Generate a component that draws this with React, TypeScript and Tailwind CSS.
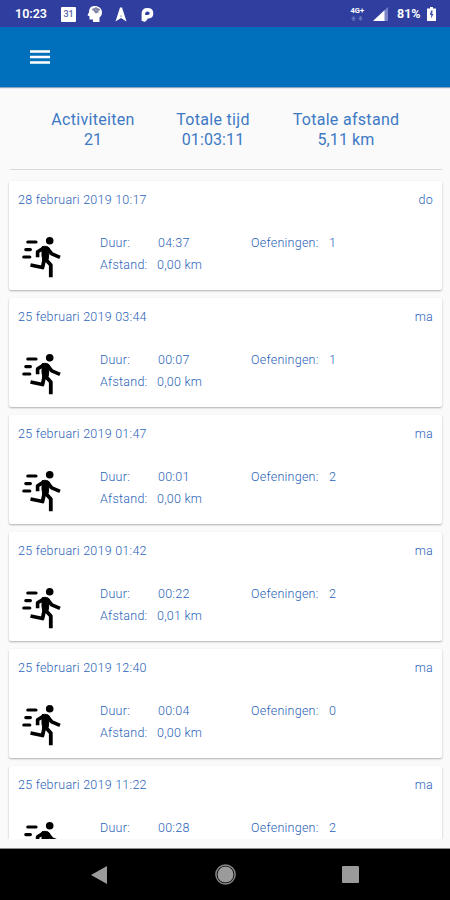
import type { ReactNode } from 'react'

type Activity = {
  date: string
  day: string
  duration: string
  distance?: string
  exercises: number
}

const activities: Activity[] = [
  { date: '28 februari 2019 10:17', day: 'do', duration: '04:37', distance: '0,00 km', exercises: 1 },
  { date: '25 februari 2019 03:44', day: 'ma', duration: '00:07', distance: '0,00 km', exercises: 1 },
  { date: '25 februari 2019 01:47', day: 'ma', duration: '00:01', distance: '0,00 km', exercises: 2 },
  { date: '25 februari 2019 01:42', day: 'ma', duration: '00:22', distance: '0,01 km', exercises: 2 },
  { date: '25 februari 2019 12:40', day: 'ma', duration: '00:04', distance: '0,00 km', exercises: 0 },
  { date: '25 februari 2019 11:22', day: 'ma', duration: '00:28', exercises: 2 },
]

function RunnerIcon() {
  return (
    <svg className="block h-11 w-[42px]" viewBox="0 0 42 44" fill="none" stroke="#000" strokeWidth="3.6" strokeLinejoin="round">
      <path d="M7.8 6h8.2M5.8 13.6h4.6M3.8 21h6" strokeWidth="3.2" strokeLinecap="round" />
      <circle cx="29.7" cy="4.8" r="3.8" fill="#000" stroke="none" />
      <path d="M17.6 21.3v-5.6l6.5-3.8M27.5 12.5l4.3 5.3 8.2 3.5" />
      <path d="M22 10.8q5-1.5 7.5 1.5l-1.3 11-5.2 1.5-1-5z" fill="#000" strokeWidth="1" />
      <path d="M24.5 22.5l-2 9-12-2.5M25.8 23.5l5 5.5v12.2" strokeWidth="3.8" />
    </svg>
  )
}

function Total({ label, children, className }: { label: string; children: ReactNode; className: string }) {
  return (
    <div className={className}>
      <div>{label}</div>
      <div className="tracking-[0.1px]">{children}</div>
    </div>
  )
}

function ActivityCard({ activity }: { activity: Activity }) {
  return (
    <div className="h-[109px] shrink-0 rounded-[2px] bg-white px-[9px] pt-[9px] text-[12.5px] font-light leading-5 tracking-[0.25px] text-[#2a63b8] shadow-[0_1px_2px_rgba(0,0,0,0.3)]">
      <div className="flex justify-between">
        <span>{activity.date}</span>
        <span>{activity.day}</span>
      </div>
      <div className="flex pt-[22px]">
        <div className="w-[82px] pl-[2px] pt-1">
          <RunnerIcon />
        </div>
        <div className="w-[151px] leading-[22px]">
          <div className="flex">
            <span className="w-[58px]">Duur:</span>
            <span>{activity.duration}</span>
          </div>
          {activity.distance && (
            <div className="flex">
              <span className="w-[57px]">Afstand:</span>
              <span>{activity.distance}</span>
            </div>
          )}
        </div>
        <div className="flex leading-[22px]">
          <span className="w-[78px]">Oefeningen:</span>
          <span>{activity.exercises}</span>
        </div>
      </div>
    </div>
  )
}

function StatusBar() {
  return (
    <div className="flex h-[27px] shrink-0 items-center bg-[#303f9f] pt-px text-[12.5px] font-bold leading-none text-white">
      <span className="w-[46px] pl-[15px] font-semibold">10:23</span>
      <div className="ml-[15px] flex h-[15px] w-[15px] items-center justify-center rounded-[1px] bg-white text-[9px] font-medium text-[#5965b0]">31</div>
      <svg className="ml-[11px] h-4 w-4" viewBox="0 0 16 16">
        <path d="M7.5 0C12 0 15 2.5 15 6.4c0 2.3-1 3.8-2.5 5V16H6v-2.5H2.5v-3.3L.5 9.5 2 6C2.2 2 4 0 7.5 0z" fill="#fff" />
        <path d="M5 3.4l4-1.8 4 2-4 2.6zM7 5.5l2 1.7 3-1.5" fill="#8d90ac" stroke="#666c99" strokeWidth=".6" />
      </svg>
      <svg className="ml-[12px] h-[15px] w-3" viewBox="0 0 12 15" fill="#fff">
        <path d="M5 .5h2L11.5 14.5 6 11 .5 14.5z" />
        <path d="M6 8l.7 1.7L6 9.4l-.7.3z" fill="#303f9f" />
      </svg>
      <svg className="ml-[14px] h-[15px] w-[13px]" viewBox="0 0 13 15">
        <path d="M2.4 14V6.6Q2.4 2.7 6.4 2.7 10.5 2.7 10.5 6.3 10.5 9.7 6.8 9.7H5q0 3.4-2.6 3.4" fill="none" stroke="#fff" strokeWidth="3.6" />
      </svg>
      <div className="ml-auto mb-px flex flex-col items-center text-[7.5px] leading-[7px]">
        <span>4G+</span>
        <svg className="mt-[2px] h-[5px] w-3" viewBox="0 0 12 5" fill="#6570bd">
          <path d="M2.5 0L5 3H3.5v2h-2V3H0zM9.5 5L7 2h1.5V0h2v2H12z" />
        </svg>
      </div>
      <svg className="ml-[9px] h-[15px] w-[15px]" viewBox="0 0 15 15">
        <path d="M15 0v14H0z" fill="#7983c5" />
        <path d="M11.5 3.3V14H0z" fill="#fff" />
      </svg>
      <span className="ml-[9px] w-[26px]">81%</span>
      <svg className="ml-1 mr-[14px] h-[14px] w-[9px]" viewBox="0 0 9 14">
        <path d="M3 0h3v1.5h3V14H0V1.5h3z" fill="#fff" />
        <path d="M4 3.5h1.6L5.2 7h1.4L4 11.5 4.2 8H2.8z" fill="#4e5aad" />
      </svg>
    </div>
  )
}

export default function App() {
  return (
    <div className="flex h-[900px] w-[450px] flex-col overflow-hidden bg-[#fafafa] font-['Roboto',sans-serif]">
      <StatusBar />

      {/* App bar */}
      <header className="flex h-[60px] shrink-0 items-center bg-[#0070bd] pl-[30px] shadow-[0_1px_1px_rgba(0,60,130,0.45)]">
        <button type="button" aria-label="Menu">
          <svg className="block h-[14px] w-5" viewBox="0 0 20 14" stroke="#fff" strokeWidth="2.5">
            <path d="M0 1.4h20M0 7h20M0 12.6h20" />
          </svg>
        </button>
      </header>

      {/* Totals */}
      <section className="ml-[10px] mr-2 flex h-[83px] shrink-0 border-b border-[#dadada] pt-[23px] text-center text-[16px] leading-5 tracking-[0.3px] text-[#3d79c4]">
        <Total label="Activiteiten" className="ml-[31px] w-[104px]">21</Total>
        <Total label="Totale tijd" className="ml-5 w-[96px]">01:03:11</Total>
        <Total label="Totale afstand" className="ml-[15px] w-[140px]">5,11 km</Total>
      </section>

      {/* Activity list */}
      <main className="flex h-[669px] shrink-0 flex-col gap-2 overflow-hidden pl-[9px] pr-2 pt-[11px]">
        {activities.map((activity) => (
          <ActivityCard key={activity.date} activity={activity} />
        ))}
      </main>

      {/* Android navigation */}
      <nav className="mt-auto flex h-[52px] shrink-0 items-center justify-between border-t border-[#8d8d8d] bg-black pl-[91px] pr-[91px]">
        <svg className="h-[18px] w-4" viewBox="0 0 16 18">
          <path d="M16 0v18L0 9z" fill="#9b9b9b" />
        </svg>
        <svg className="ml-[2px] h-[21px] w-[21px]" viewBox="0 0 21 21">
          <circle cx="10.5" cy="10.5" r="8" fill="#9b9b9b" />
          <circle cx="10.5" cy="10.5" r="9.6" fill="none" stroke="#858585" strokeWidth="1.5" />
        </svg>
        <div className="h-[17px] w-[17px] rounded-[1px] bg-[#9b9b9b]" />
      </nav>
    </div>
  )
}
